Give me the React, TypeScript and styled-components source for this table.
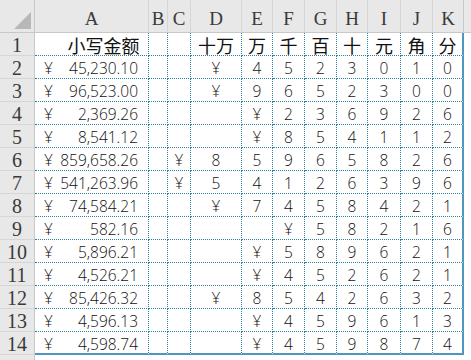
import React from 'react';
import styled, { createGlobalStyle } from 'styled-components';

const GlobalStyle = createGlobalStyle`
    html, body {
        margin: 0;
        padding: 0;
        background: #ffffff;
    }
`;

const COLS = ['A', 'B', 'C', 'D', 'E', 'F', 'G', 'H', 'I', 'J', 'K'];
const UNITS = ['', '', '十万', '万', '千', '百', '十', '元', '角', '分'];

const amounts = [
    '45,230.10',
    '96,523.00',
    '2,369.26',
    '8,541.12',
    '859,658.26',
    '541,263.96',
    '74,584.21',
    '582.16',
    '5,896.21',
    '4,526.21',
    '85,426.32',
    '4,596.13',
    '4,598.74',
];

// B..K = 10 slots, digits right aligned, yen sign just before the first digit
const splitDigits = (s: string) => {
    const d = s.replace(/[,.]/g, '');
    const slots: string[] = Array(10).fill('');
    const start = 10 - d.length;
    for (let i = 0; i < d.length; i++) slots[start + i] = d[i];
    if (start > 0) slots[start - 1] = '¥';
    return slots;
};

const Sheet = styled.div`
    display: grid;
    grid-template-columns: 35px 114px 19px 23px 51px 31px 32px 32px 31px 33px 32px 31px 1fr;
    grid-template-rows: 33px repeat(14, 23px) 1fr;
    width: 471px;
    height: 360px;
    overflow: hidden;
    background: #ffffff;
`;

const Corner = styled.div`
    background: #e8e8e8;
    border-right: 1px solid #c8c8c8;
    border-bottom: 1px solid #c8c8c8;
    display: flex;
    align-items: flex-end;
    justify-content: flex-end;
    padding: 0 3px 3px 0;
`;

const CornerMark = styled.div`
    width: 17px;
    height: 17px;
    background: #b8b8b8;
    clip-path: polygon(100% 0, 100% 100%, 0 100%);
`;

const ColHead = styled.div<{ $last?: boolean }>`
    background: #e8e8e8;
    border-right: 1px solid ${(p) => (p.$last ? '#c8c8c8' : '#d6d6d6')};
    border-bottom: 1px solid #c8c8c8;
    display: flex;
    align-items: center;
    justify-content: center;
    padding-top: 5px;
    font-family: 'Liberation Serif', 'Times New Roman', serif;
    font-size: 19px;
    color: #3a3a3a;
`;

const ColHeadFill = styled.div`
    background: #e8e8e8;
    border-bottom: 1px solid #c8c8c8;
`;

const RowHead = styled.div`
    background: #e8e8e8;
    border-right: 1px solid #c8c8c8;
    border-bottom: 1px solid #d6d6d6;
    display: flex;
    align-items: center;
    justify-content: center;
    padding-top: 2px;
    font-family: 'Liberation Serif', 'Times New Roman', serif;
    font-size: 20px;
    color: #3a3a3a;
`;

const RowHeadFill = styled.div`
    background: #e8e8e8;
    border-right: 1px solid #c8c8c8;
`;

const Cell = styled.div<{ $lastCol?: boolean; $lastRow?: boolean }>`
    border-right: ${(p) => (p.$lastCol ? '2px solid #4f97bf' : '1px dotted #2f7f9f')};
    border-bottom: ${(p) => (p.$lastRow ? '2px solid #4f97bf' : '1px dotted #2f7f9f')};
    display: flex;
    align-items: center;
    justify-content: center;
    padding-top: 2px;
    font-family: 'Open Sans', 'Liberation Sans', 'Noto Sans CJK SC', sans-serif;
    font-weight: 300;
    font-size: 15.5px;
    color: #111111;
    white-space: nowrap;
`;

const TitleCell = styled(Cell)`
    padding-top: 1px;
    padding-left: 24px;
`;

const CjkText = styled.span`
    font-family: 'Noto Sans CJK SC', sans-serif;
    font-weight: 400;
    font-size: 18px;
`;

const AmountCell = styled(Cell)`
    justify-content: space-between;
    padding-left: 9px;
    padding-right: 10px;
`;

const UnitCell = styled(Cell)`
    padding-top: 1px;
`;

const Blank = styled.div``;

function App() {
    return (
        <>
            <GlobalStyle />
            <Sheet>
                <Corner>
                    <CornerMark />
                </Corner>
                {COLS.map((c, i) => (
                    <ColHead key={c} $last={i === COLS.length - 1}>
                        {c}
                    </ColHead>
                ))}
                <ColHeadFill />

                <RowHead>1</RowHead>
                <TitleCell>
                    <CjkText>小写金额</CjkText>
                </TitleCell>
                {UNITS.map((u, i) => (
                    <UnitCell key={i} $lastCol={i === UNITS.length - 1}>
                        <CjkText>{u}</CjkText>
                    </UnitCell>
                ))}
                <Blank />

                {amounts.map((a, r) => {
                    const slots = splitDigits(a);
                    const lastRow = r === amounts.length - 1;
                    return (
                        <React.Fragment key={a}>
                            <RowHead>{r + 2}</RowHead>
                            <AmountCell $lastRow={lastRow}>
                                <span>¥</span>
                                <span>{a}</span>
                            </AmountCell>
                            {slots.map((s, i) => (
                                <Cell key={i} $lastCol={i === slots.length - 1} $lastRow={lastRow}>
                                    {s}
                                </Cell>
                            ))}
                            <Blank />
                        </React.Fragment>
                    );
                })}

                <RowHeadFill />
            </Sheet>
        </>
    );
}

export default App;
